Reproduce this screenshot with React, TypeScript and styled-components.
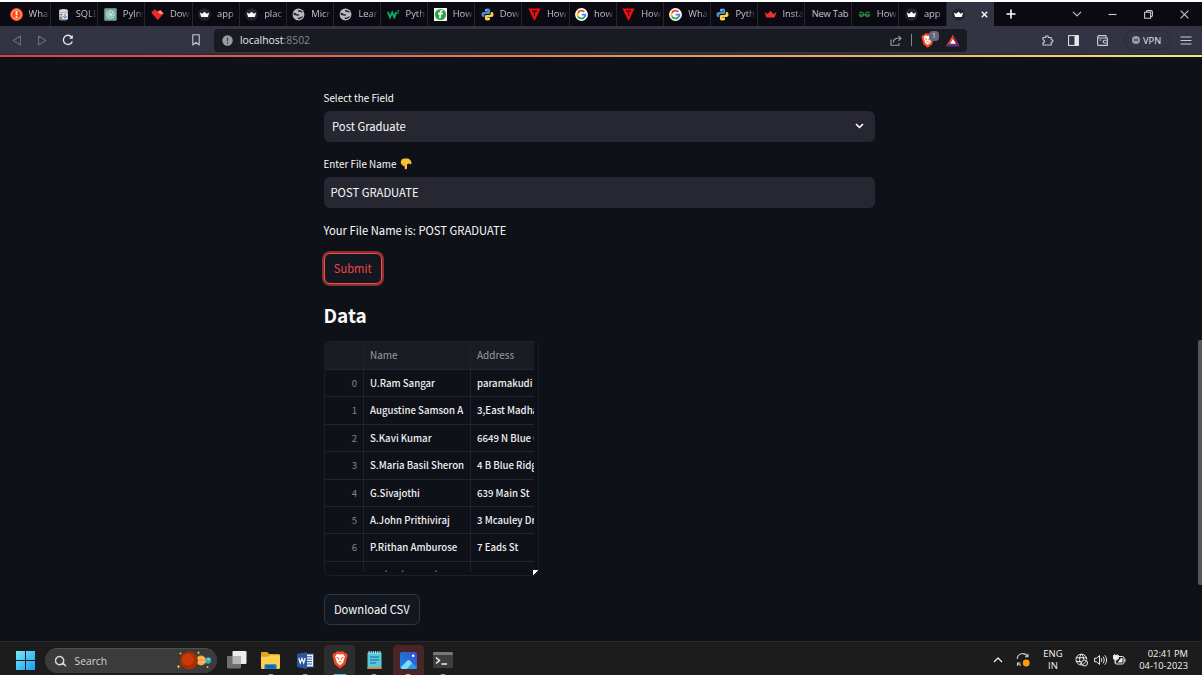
import React from 'react';
import styled, { createGlobalStyle, css } from 'styled-components';

const ui = `"Open Sans", "Noto Sans", sans-serif`;
const source = `"Noto Sans CJK JP", "Noto Sans", sans-serif`;

const GlobalStyle = createGlobalStyle`
  * { box-sizing: border-box; }
  body { margin: 0; background: #0e1117; overflow: hidden; }
  svg { display: block; flex: none; }
`;

const Screen = styled.div`
  width: 1202px;
  height: 675px;
  display: flex;
  flex-direction: column;
  border-top: 2px solid #fdfdfd;
  overflow: hidden;
  background: #0e1117;
`;

/* ---------- Browser chrome ---------- */

const TabStrip = styled.div`
  flex: none;
  display: flex;
  height: 24px;
  padding-left: 4px;
  background: #0b0a13;
  font-family: ${ui};
`;

const TabBox = styled.div<{ $active?: boolean; $bare?: boolean }>`
  position: relative;
  flex: none;
  width: 47.13px;
  display: flex;
  align-items: center;
  gap: 6px;
  padding-left: ${p => (p.$bare ? 6.5 : 5.5)}px;
  background: ${p => (p.$active ? '#323443' : 'transparent')};
  border-right: ${p => (p.$active ? 'none' : '1px solid #25252a')};
`;

const TabTitle = styled.span<{ $full?: boolean }>`
  width: ${p => (p.$full ? 38 : 20)}px;
  overflow: hidden;
  white-space: nowrap;
  font-size: 9.4px;
  line-height: 14px;
  letter-spacing: ${p => (p.$full ? '-0.2px' : '0')};
  color: #c3c3c9;
  ${p =>
    !p.$full &&
    css`
      mask-image: linear-gradient(90deg, #000 60%, transparent 105%);
    `}
`;

const TabClose = styled.div`
  margin-left: 9.5px;
`;

const WindowControls = styled.div`
  flex: 1;
  display: flex;
  align-items: center;
  padding-left: 11px;
`;

const Spacer = styled.div<{ $w: number }>`
  flex: none;
  width: ${p => p.$w}px;
`;

const Toolbar = styled.div`
  flex: none;
  height: 28px;
  display: flex;
  align-items: center;
  background: #323443;
  font-family: ${ui};
`;

const AddressBar = styled.div`
  width: 753px;
  height: 23px;
  display: flex;
  align-items: center;
  padding: 0 7px 0 8px;
  border-radius: 4px;
  background: #191b22;
`;

const Url = styled.span`
  flex: 1;
  margin-left: 7px;
  font-size: 10.4px;
  line-height: 16px;
  color: #e9eaec;
  span { color: #85868c; }
`;

const Divider = styled.div`
  width: 1px;
  height: 12px;
  margin: 0 9px;
  background: #85868c;
`;

const VpnPill = styled.div`
  width: 47px;
  height: 20px;
  display: flex;
  align-items: center;
  gap: 3px;
  padding-left: 7px;
  border: 1px solid #292b36;
  border-radius: 10px;
  font: 500 9.3px ${ui};
  color: #e4e4ea;
`;

const ShieldBadge = styled.div`
  position: relative;
  width: 18px;
  height: 16px;
  margin-right: 7px;
  svg { margin-top: 1px; }
  span {
    position: absolute;
    top: -1px;
    left: 8px;
    width: 10px;
    height: 10px;
    border-radius: 3.5px;
    background: #646777;
    color: #dfe0e6;
    font-size: 7px;
    line-height: 10px;
    text-align: center;
  }
`;

const Decoration = styled.div`
  flex: none;
  height: 3px;
  border-top: 1px solid #2c2630;
  background: linear-gradient(90deg, #d8433f 0%, #e56a4b 30%, #e8965a 55%, #efc069 80%, #f2ea7e 100%);
`;

/* ---------- Streamlit page ---------- */

const Page = styled.main`
  position: relative;
  flex: none;
  height: 584px;
  padding: 31px 0 0 323.5px;
  background: #0e1117;
  color: #fafafa;
  font-family: ${source};
  overflow: hidden;
`;

const Scrollbar = styled.div`
  position: absolute;
  right: 0;
  top: 283px;
  width: 4px;
  height: 245px;
  border-radius: 2px 0 0 2px;
  background: #54565b;
`;

const Label = styled.label`
  display: flex;
  align-items: center;
  gap: 4px;
  height: 20px;
  margin-bottom: 3px;
  font-size: 9.9px;
  line-height: 20px;
`;

const Field = styled.div<{ $left: number }>`
  display: flex;
  align-items: center;
  justify-content: space-between;
  width: 551.5px;
  height: 31px;
  margin-bottom: 12px;
  padding: 0 11.5px 1px ${p => p.$left}px;
  border-radius: 6px;
  background: #262730;
  font-size: 11.25px;
`;

const Paragraph = styled.p`
  height: 20px;
  margin: 13px 0 12px;
  font-size: 11.25px;
  line-height: 19px;
`;

const Button = styled.button<{ $focused?: boolean; $w: number }>`
  display: block;
  width: ${p => p.$w}px;
  height: 31px;
  padding: 0;
  border: 1px solid ${p => (p.$focused ? '#ff4b4b' : '#34363d')};
  border-radius: 6px;
  background: #131720;
  box-shadow: ${p => (p.$focused ? '0 0 0 2px rgba(255, 75, 75, 0.5)' : 'none')};
  color: ${p => (p.$focused ? '#ee4648' : '#fafafa')};
  font: 400 11.2px/27px ${source};
  white-space: nowrap;
`;

const Heading = styled.h3`
  height: 26px;
  margin: 18px 0 13px;
  font-size: 19px;
  font-weight: 700;
  line-height: 26px;
`;

const Grid = styled.div`
  position: relative;
  width: 215px;
  height: 235px;
  margin-bottom: 18px;
  border: 1px solid #1c1f26;
  border-radius: 6px;
  overflow: hidden;
`;

const GridCanvas = styled.div`
  width: 209.5px;
  height: 230px;
  overflow: hidden;
`;

const Row = styled.div<{ $head?: boolean }>`
  display: grid;
  grid-template-columns: 39.5px 107px 63px;
  height: ${p => (p.$head ? 28 : 27.4)}px;
  border-bottom: 1px solid #22252b;
  background: ${p => (p.$head ? '#1a1c24' : 'transparent')};
  color: ${p => (p.$head ? '#9a9ba1' : '#f0f0f2')};
  font-size: ${p => (p.$head ? 10 : 9.65)}px;
  font-weight: ${p => (p.$head ? 400 : 500)};
  line-height: 26px;
`;

const Cell = styled.div<{ $index?: boolean }>`
  overflow: hidden;
  white-space: nowrap;
  padding: ${p => (p.$index ? '0 6px 0 0' : '0 0 0 6px')};
  border-right: 1px solid #1f2228;
  &:last-child { border-right: none; }
  ${p =>
    p.$index &&
    css`
      color: #83848a;
      font-weight: 400;
      text-align: right;
    `}
`;

const ResizeHandle = styled.div`
  position: absolute;
  right: 0;
  bottom: 0;
  width: 5px;
  height: 5px;
  background: linear-gradient(135deg, #fff 55%, #0e1117 56%);
`;

/* ---------- Taskbar ---------- */

const Taskbar = styled.footer`
  flex: none;
  height: 34px;
  display: flex;
  align-items: center;
  padding: 3px 14px 0 16px;
  border-top: 1px solid #2b2b2d;
  background: #1c1c1c;
  font-family: ${ui};
  color: #f2f2f2;
`;

const SearchBox = styled.div`
  width: 172px;
  height: 25px;
  display: flex;
  align-items: center;
  margin: 0 4px 0 10px;
  padding: 0 4px 0 9.5px;
  border-radius: 13px;
  border-top: 1px solid #505050;
  background: #3b3b3b;
  font-size: 10.3px;
  color: #d4d4d4;
  span { flex: 1; margin-left: 8px; }
`;

const AppSlot = styled.div<{ $bg?: string; $mark?: string; $wide?: boolean }>`
  position: relative;
  width: 31px;
  height: 31px;
  margin-right: 3.4px;
  display: flex;
  align-items: center;
  justify-content: center;
  border-radius: 4px;
  background: ${p => p.$bg ?? 'transparent'};
  &::after {
    content: '';
    display: ${p => (p.$mark ? 'block' : 'none')};
    position: absolute;
    bottom: 0;
    left: 50%;
    width: ${p => (p.$wide ? 13 : 5)}px;
    height: 2px;
    transform: translateX(-50%);
    border-radius: 1px;
    background: ${p => p.$mark};
  }
`;

const Tray = styled.div`
  flex: 1;
  display: flex;
  align-items: center;
  justify-content: flex-end;
`;

const TrayText = styled.div<{ $align: string; $w: number; $size: number }>`
  width: ${p => p.$w}px;
  font-size: ${p => p.$size}px;
  line-height: 12.3px;
  text-align: ${p => p.$align};
  white-space: nowrap;
`;

/* ---------- Icons ---------- */

const Crown = ({ red }: { red?: boolean }) => (
  <svg width="13" height="13" viewBox="0 0 13 13">
    {!red && <circle cx="6.5" cy="6.5" r="6.3" fill="#24252b" />}
    <path
      d={red ? 'M.5 4 3.6 6 6.5 2.8 9.4 6 12.5 4 10.6 9.6H2.4Z' : 'M1.8 4.4 4.2 5.8 6.5 3.8 8.8 5.8 11.2 4.4 9.8 9H3.2Z'}
      fill={red ? '#ee3030' : '#fff'}
    />
  </svg>
);

const Globe = () => (
  <svg width="13" height="13" viewBox="0 0 13 13">
    <circle cx="6.5" cy="6.5" r="5.9" fill="#b9bbc0" />
    <path d="M1.600 5C3.600 4.200 4.200 6.600 6.400 6.200 8 6 7.200 7.600 6.200 7.800 4.800 8 4.600 7 1.600 7ZM6.400 1.900C8 1.700 10.300 2.800 10.900 4.500 9.200 4.900 8.800 3.900 7.600 4 6.600 4.100 5.600 3 6.400 1.900ZM5.500 9.500C7.500 9.800 9.200 8.800 11.200 7.700 10.400 9.800 8.800 11.200 6.200 11.200Z" fill="#2a2b32" />
  </svg>
);

const Python = () => (
  <svg width="13" height="13" viewBox="0 0 13 13">
    <path d="M6.4.5C4.2.5 4 1.4 4 2.200v1.300h2.600v.5H2.400C1.200 4 .5 4.900.5 6.500S1.200 9 2.200 9H3.200V7.500C3.200 6.500 4 5.900 4.900 5.900H7.900C8.700 5.900 9.200 5.300 9.200 4.600V2.200C9.200 1.200 8.200.5 6.400.5Z" fill="#4a8fc7" />
    <path d="M6.600 12.500c2.200 0 2.400-.9 2.400-1.700V9.500H6.400V9h4.200c1.200 0 1.900-.9 1.900-2.500S11.800 4 10.800 4H9.900v1.200c0 1-.8 1.700-1.700 1.700H5.200C4.400 6.900 3.900 7.600 3.900 8.300v2.400c0 1.100.9 1.800 2.700 1.800Z" fill="#fbd245" />
    <circle cx="5.100" cy="2.200" r=".6" fill="#fff" />
    <circle cx="7.900" cy="10.900" r=".6" fill="#fff" />
  </svg>
);

const Google = () => (
  <svg width="13" height="13" viewBox="0 0 13 13">
    <circle cx="6.500" cy="6.500" r="6.400" fill="#fff" />
    <g fill="none" strokeWidth="1.800">
      <path d="M9.400 3.800A4 4 0 0 0 2.900 4.800" stroke="#ea4335" />
      <path d="M2.900 4.800a4 4 0 0 0 0 3.500" stroke="#fbbc05" />
      <path d="M2.900 8.300a4 4 0 0 0 6.200 1.200" stroke="#34a853" />
      <path d="M9.100 9.500a4 4 0 0 0 1.300-2.900H6.600" stroke="#4285f4" />
    </g>
  </svg>
);

const RedTriangle = () => (
  <svg width="13" height="13" viewBox="0 0 13 13">
    <path d="M.3.5h12.400L6.500 12.900Z" fill="#f30b10" />
    <path d="M4 3.200h5M6.500 3.200v4.800" stroke="#2a0508" strokeWidth="1.200" />
  </svg>
);

const Alert = () => (
  <svg width="13" height="13" viewBox="0 0 13 13">
    <circle cx="6.500" cy="6.500" r="6.400" fill="#fb4b16" />
    <circle cx="6.500" cy="6.500" r="4.800" fill="none" stroke="#fff" strokeWidth=".6" />
    <path d="M6.500 3v4.200M6.500 8.300v1.600" stroke="#fff" strokeWidth="1.700" />
  </svg>
);

const Database = () => (
  <svg width="13" height="13" viewBox="0 0 13 13">
    <path d="M2 2.500h9v8.500a4.500 1.500 0 0 1-9 0Z" fill="#8f9297" />
    <ellipse cx="6.500" cy="2.500" rx="4.500" ry="1.600" fill="#d9dadc" />
    <path d="M2 5.200h9M2 8h9" stroke="#dedfe1" strokeWidth="1.200" />
    <path d="M5.500 5.500h5v5.500H5.500Z" fill="#e7edf2" />
    <path d="M6.200 8.200 8 10.200 9.800 8.200M8 5.800v4" stroke="#2a72b5" strokeWidth=".9" fill="none" />
  </svg>
);

const ChatGpt = () => (
  <svg width="13" height="13" viewBox="0 0 13 13">
    <rect x=".3" y=".3" width="12.400" height="12.400" rx="1" fill="#74aa9c" />
    <g fill="none" stroke="#e9f3f0" strokeWidth=".65">
      {[0, 60, 120, 180, 240, 300].map(a => (
        <path key={a} d="M4.700 3.700a1.900 1.900 0 0 1 3.600 0v2.200L6.500 7" transform={`rotate(${a} 6.500 6.500)`} />
      ))}
    </g>
  </svg>
);

const RedDiamond = () => (
  <svg width="13" height="13" viewBox="0 0 13 13">
    <path d="M.3 4.500 3.600 1.200 6.500 3.400 9.500 2.200 12.700 5.400 6.700 12Z" fill="#ec2a2a" />
    <path d="M6.500 3.400 9.500 2.200 12.700 5.400 9.500 6.400Z" fill="#ff8a80" />
    <path d="M9.500 6.400 12.700 5.400 6.700 12Z" fill="#cf2023" />
  </svg>
);

const W3 = () => (
  <svg width="13" height="13" viewBox="0 0 13 13">
    <path d="M.8 3.800 3 9.200 5.200 4.500 7.300 9.200 9.300 3.800" fill="none" stroke="#0fa968" strokeWidth="1.900" />
    <path d="M10 2.500h1.800L10.900 4c1.200 0 1.200 2-.9 1.500" fill="none" stroke="#0fa968" strokeWidth=".8" />
  </svg>
);

const GreenBadge = () => (
  <svg width="13" height="13" viewBox="0 0 13 13">
    <rect width="13" height="13" fill="#f4f8f4" />
    <circle cx="6.500" cy="6.500" r="5.600" fill="#2da248" />
    <path d="M8.700 2.700C7 2.200 6.400 3.400 6.300 4.800L5.900 10.300M4 5.600h4.800" fill="none" stroke="#fff" strokeWidth="1.600" />
  </svg>
);

const Geeks = () => (
  <svg width="13" height="13" viewBox="0 0 13 13">
    <path d="M1.500 5C3 3.400 5.600 4.200 5.600 6.500S2 9.800 1.400 6.800H11.600C11 9.800 7.400 8.800 7.400 6.500S10 3.400 11.500 5" fill="none" stroke="#2b8a46" strokeWidth="1.200" />
  </svg>
);

const Stroke = ({ w, h = w, d, color = '#c9cad2', sw = 1.1 }: { w: number; h?: number; d: string; color?: string; sw?: number }) => (
  <svg width={w} height={h} viewBox={`0 0 ${w} ${h}`} fill="none" stroke={color} strokeWidth={sw} strokeLinejoin="round">
    <path d={d} />
  </svg>
);

const BraveLion = ({ size }: { size: number }) => (
  <svg width={size} height={size * 1.12} viewBox="0 0 16 18">
    <path d="M4.600.5h6.800l1.700 1.800 1.700.3.8 2.400-.6 1.500-1.700 6.800L8 17.700l-5.300-4.400L1 6.500.4 5l.8-2.400 1.700-.3Z" fill="#fb4a1f" />
    <path d="M8 3.600 11 3.100l2 2.600-1.600 4.400-.2 1.400L8 14.200l-3.200-2.700-.2-1.400L3 5.700 5 3.100Z" fill="#fff" />
    <path d="M4.600 6.400 6.800 7.300 6.600 8.800M11.400 6.400 9.200 7.300 9.400 8.800M6.400 11.300 8 10.400l1.600.9" fill="none" stroke="#fb4a1f" strokeWidth="1" />
  </svg>
);

const BatTriangle = () => (
  <svg width="14" height="13" viewBox="0 0 14 13">
    <path d="M7 .5 7 5 3.800 9.500 0 12.500Z" fill="#ff4724" />
    <path d="M7 .5 14 12.500 10 9.500 7 5Z" fill="#9e1f63" />
    <path d="M0 12.500 3.800 9.500h6.200l4 3Z" fill="#662d91" />
    <path d="M7 4.800 10 9.700H4Z" fill="#fff" />
  </svg>
);

const PointDown = () => (
  <svg width="12" height="12" viewBox="0 0 12 12">
    <path d="M.8 4.500C.6 2 2.200.4 4.600.4h2.800C9.500.4 11.500 3 11.500 5c0 1.200-1.400 1.600-2 .8L8.600 5.500 7.100 6.300 7 10.200c-.1 1.500-2.200 1.500-2.300 0L4.500 7.800C3.200 8.500 2.400 7.600 2.400 6.800 1.200 6.900.9 5.700.8 4.500Z" fill="#fcc32f" />
    <path d="M2.400 6.700V5M4.500 7.700V5.300" stroke="#d48a17" strokeWidth=".5" />
  </svg>
);

const WindowsLogo = () => (
  <svg width="19" height="19" viewBox="0 0 19 19">
    <defs>
      <linearGradient id="win" x1="0" y1="0" x2="19" y2="19" gradientUnits="userSpaceOnUse">
        <stop offset="0" stopColor="#7be7fb" />
        <stop offset="1" stopColor="#169ef0" />
      </linearGradient>
    </defs>
    <path d="M0 0h9v9H0ZM10 0h9v9h-9ZM0 10h9v9H0ZM10 10h9v9h-9Z" fill="url(#win)" />
  </svg>
);

const Planets = () => (
  <svg width="36" height="19" viewBox="0 0 36 19">
    <circle cx="31" cy="9.500" r="3.200" fill="#2fa5c9" />
    <circle cx="31.500" cy="8.300" r="1.400" fill="#7fe08a" />
    <circle cx="24" cy="9.500" r="5" fill="#f5a64b" />
    <path d="M20.500 7.500Q24 5.800 27 7.500M20.500 11H28" stroke="#ffd08a" strokeWidth=".9" fill="none" />
    <circle cx="12" cy="9.500" r="9" fill="#a92c05" />
    <circle cx="11" cy="8.500" r="6" fill="#c53c08" />
    <path d="M1.500 14v3.400M-.2 15.700h3.400M3.500 1.500v2M2.500 2.500h2M21.500.5v2.600M20.200 1.800h2.600M30.500 15v2M29.500 16h2" stroke="#f2c230" strokeWidth=".9" />
  </svg>
);

const TaskView = () => (
  <svg width="20" height="18" viewBox="0 0 20 18">
    <rect x="5.500" y="0" width="14" height="13" rx="1" fill="#ededed" />
    <rect x="0" y="5" width="14" height="12.500" rx="1" fill="#6f6f6f" />
    <path d="M5.500 5h8.500v8h-8.500Z" fill="#b5b5b5" />
  </svg>
);

const Folder = () => (
  <svg width="19" height="17" viewBox="0 0 19 17">
    <path d="M0 1.200C0 .5.500 0 1.200 0h5l2 2H17.500c.8 0 1.500.6 1.500 1.400V15H0Z" fill="#e5a21a" />
    <path d="M0 4.800h7.200L9 3.300h10V15.500c0 .8-.6 1.500-1.400 1.500H1.400C.6 17 0 16.300 0 15.500Z" fill="#ffd04d" />
    <path d="M3.500 17v-3.500c0-.8.6-1.300 1.300-1.300h9.400c.7 0 1.300.5 1.300 1.300V17Z" fill="#1677c9" />
    <path d="M6 14.500h7" stroke="#0c4b8d" />
  </svg>
);

const WordIcon = () => (
  <svg width="17" height="17" viewBox="0 0 17 17">
    <rect x="7" y="2" width="9.500" height="13" fill="#f3f6fb" stroke="#2b5797" />
    <path d="M9 4.800h6M9 7.200h6M9 9.600h6M9 12h6" stroke="#2b5797" />
    <path d="M0 2 10 0v17L0 15Z" fill="#29559c" />
    <path d="M1.800 6 3.300 11 5 6.500 6.700 11 8.200 6" fill="none" stroke="#fff" strokeWidth="1.200" />
  </svg>
);

const Notepad = () => (
  <svg width="15" height="18" viewBox="0 0 15 18">
    <rect x=".5" y="1.500" width="14" height="16.500" rx="1" fill="#58c7de" />
    <rect x=".5" y="16" width="14" height="2" fill="#d58b47" />
    <path d="M2 0v3M4.200 0v3M6.400 0v3M8.600 0v3M10.800 0v3M13 0v3" stroke="#b7edf7" />
    <path d="M3 6h9M3 9h9M3 12h6" stroke="#176e8c" strokeWidth="1.200" />
  </svg>
);

const Photos = () => (
  <svg width="17" height="17" viewBox="0 0 17 17">
    <defs>
      <linearGradient id="photo" x1="0" y1="1" x2="1" y2="0">
        <stop offset="0" stopColor="#1787e0" />
        <stop offset="1" stopColor="#3850c9" />
      </linearGradient>
    </defs>
    <rect width="17" height="17" rx="2" fill="url(#photo)" />
    <path d="M.5 15.500 7.500 8.500c.8-.8 1.500-.8 2.200 0L12.500 11.300 7 17H2Z" fill="#7bdcfb" />
    <path d="M7 17 12.500 11.300 17 15.500Q16.500 17 15 17Z" fill="#2a9ce8" />
    <circle cx="13.200" cy="3.800" r="1.300" fill="#fff" />
  </svg>
);

const Terminal = () => (
  <svg width="20" height="16" viewBox="0 0 20 16">
    <rect width="20" height="16" rx="1.500" fill="#3d3d3d" />
    <path d="M0 3V1.500C0 .6.600 0 1.500 0h17c.9 0 1.500.6 1.500 1.500V3Z" fill="#777" />
    <path d="M3 5.500 6.500 8.500 3 11.500M8.500 12H14" fill="none" stroke="#f0f0f0" strokeWidth="1.500" />
  </svg>
);

const Sync = () => (
  <svg width="14" height="14" viewBox="0 0 14 14">
    <path d="M1.200 6A5.500 5.500 0 0 1 11.500 3.500M12 .8v3H9M1.500 13v-3h3M1.800 10.200A5.500 5.500 0 0 0 5 12.400" fill="none" stroke="#c9c9c9" strokeWidth="1.100" />
    <circle cx="10.200" cy="10" r="3.400" fill="#fb9a0b" />
  </svg>
);

const NetGlobe = () => (
  <svg width="13" height="14" viewBox="0 0 13 14" fill="none" stroke="#ececec" strokeWidth="1">
    <path d="M11.800 6.500A5.400 5.400 0 1 0 6.500 12M1.200 4.800h10.400M1.200 8.500h5M6.400 1C4 3.500 4 9.500 6.400 12M6.400 1C8 2.500 8.600 4.500 8.500 6.500" />
    <circle cx="9.500" cy="10" r="3" />
    <path d="M7.500 12 11.500 8" />
  </svg>
);

const Speaker = () => (
  <svg width="13" height="12" viewBox="0 0 13 12" fill="none" stroke="#ececec" strokeWidth="1">
    <path d="M.6 4.200v3.600h2L5.500 10.500v-9L2.600 4.200ZM7.200 4.200c.8 1 .8 2.600 0 3.600M9 2.700c1.600 1.800 1.600 4.800 0 6.600M10.800 1.300c2.300 2.700 2.300 6.700 0 9.400" />
  </svg>
);

const Battery = () => (
  <svg width="13" height="12" viewBox="0 0 13 12">
    <rect x="2" y="2.500" width="9" height="7.500" rx="1.500" fill="none" stroke="#ececec" />
    <path d="M11.500 4.800h1v3h-1Z" fill="#ececec" />
    <path d="M8 4h1.500v4.500H4.500Z" fill="#ececec" />
    <path d="M0 1.500h5.500v2.300C5.500 5.300 4.300 5.800 2.800 5.800S0 5.300 0 3.800ZM1.500 0v2M4 0v2M2.700 5v5" fill="#ececec" stroke="#ececec" strokeWidth=".8" />
  </svg>
);

/* ---------- Data ---------- */

const tabs: [React.ReactNode, string][] = [
  [<Alert />, 'What'],
  [<Database />, 'SQLE'],
  [<ChatGpt />, 'PyIns'],
  [<RedDiamond />, 'Dow'],
  [<Crown />, 'app'],
  [<Crown />, 'plac'],
  [<Globe />, 'Micr'],
  [<Globe />, 'Lear'],
  [<W3 />, 'Pyth'],
  [<GreenBadge />, 'How'],
  [<Python />, 'Dow'],
  [<RedTriangle />, 'How'],
  [<Google />, 'how'],
  [<RedTriangle />, 'How'],
  [<Google />, 'Wha'],
  [<Python />, 'Pyth'],
  [<Crown red />, 'Insta'],
  [null, 'New Tab'],
  [<Geeks />, 'How'],
  [<Crown />, 'app'],
];

const rows: [string, string][] = [
  ['U.Ram Sangar', 'paramakudi'],
  ['Augustine Samson A', '3,East Madha'],
  ['S.Kavi Kumar', '6649 N Blue G'],
  ['S.Maria Basil Sheron', '4 B Blue Ridge'],
  ['G.Sivajothi', '639 Main St'],
  ['A.John Prithiviraj', '3 Mcauley Dr'],
  ['P.Rithan Amburose', '7 Eads St'],
];

export default function App() {
  return (
    <Screen>
      <GlobalStyle />
      <TabStrip>
        {tabs.map(([icon, title], i) => (
          <TabBox key={i} $bare={!icon}>
            {icon}
            <TabTitle $full={!icon}>{title}</TabTitle>
          </TabBox>
        ))}
        <TabBox $active>
          <Crown />
          <TabClose>
            <Stroke w={7} d="M.8.800 6.200 6.200M6.200.8.800 6.200" color="#f2f2f5" sw={1.5} />
          </TabClose>
        </TabBox>
        <WindowControls>
          <Spacer $w={1} />
          <Stroke w={10} d="M5 .5v9M.5 5h9" color="#fff" sw={1.6} />
          <Spacer $w={56} />
          <Stroke w={10} h={6} d="M1 .8 5 4.800 9 .8" />
          <Spacer $w={26.5} />
          <Stroke w={9} d="M.5 4.500h8" />
          <Spacer $w={26.5} />
          <Stroke w={9} d="M.6 2.300h6v6h-6ZM2.500 2V1.500Q2.500.6 3.500.6H7Q8.400.6 8.400 2V5.500Q8.400 6.500 7 6.700" />
          <Spacer $w={27} />
          <Stroke w={9} d="M.6.600 8.400 8.400M8.400.6.600 8.400" />
        </WindowControls>
      </TabStrip>
      <Toolbar>
        <Spacer $w={12} />
        <Stroke w={10} h={11} d="M8.500 1v9L1.200 5.500Z" color="#686a78" />
        <Spacer $w={15} />
        <Stroke w={10} h={11} d="M1.500 1v9l7.300-4.500Z" color="#686a78" />
        <Spacer $w={14.5} />
        <svg width="12" height="12" viewBox="0 0 12 12" fill="none" stroke="#e9e9ee" strokeWidth="1.300">
          <path d="M10.300 7.500A4.600 4.600 0 1 1 9.600 3" />
          <path d="M10.800 1v3.700H7.200Z" fill="#e9e9ee" stroke="none" />
        </svg>
        <Spacer $w={118.5} />
        <Stroke w={8} h={12} d="M.8.800H7.200V11L4 8.300.8 11Z" />
        <Spacer $w={14} />
        <AddressBar>
          <svg width="11" height="11" viewBox="0 0 11 11">
            <circle cx="5.500" cy="5.500" r="5.200" fill="#9b9da6" />
            <path d="M5.500 2.500v3.800M5.500 7.300v1.400" stroke="#40424c" strokeWidth="1.300" />
          </svg>
          <Url>localhost<span>:8502</span></Url>
          <Stroke w={12} h={11} d="M1 4.500v5.700h8V8M3.300 7.500C3.300 4.500 5.500 3.300 8 3.300h3M8.500.8 11 3.300 8.500 5.800" color="#9d9fa8" />
          <Divider />
          <ShieldBadge>
            <BraveLion size={13.500} />
            <span>1</span>
          </ShieldBadge>
          <BatTriangle />
        </AddressBar>
        <Spacer $w={75} />
        <Stroke w={12} h={12} d="M1 3.500H3.700C3 1.200 6.800 1.200 6.200 3.500H9.200V5.800C11.500 5.200 11.500 8.800 9.200 8.200V11H1V8.600C3 8.800 3 5.800 1 6Z" />
        <Spacer $w={13.500} />
        <svg width="11" height="11" viewBox="0 0 11 11">
          <rect x=".6" y=".6" width="9.800" height="9.800" fill="none" stroke="#e6e6eb" />
          <path d="M6.500.6h4v9.800h-4Z" fill="#e6e6eb" />
        </svg>
        <Spacer $w={18.500} />
        <Stroke w={11} d="M.6 3V9.400Q.6 10.400 1.600 10.400H10.400V3ZM.6 3Q.6.6 2 .6H9V3M10.400 5.300H7.500Q6.300 5.300 6.300 6.700T7.500 8H10.400M2.500 5H4.500" />
        <Spacer $w={16} />
        <VpnPill>
          <svg width="8" height="8" viewBox="0 0 8 8">
            <circle cx="4" cy="4" r="4" fill="#9899a9" />
            <path d="M2 4h4" stroke="#323443" strokeWidth="1.200" />
          </svg>
          VPN
        </VpnPill>
        <Spacer $w={9} />
        <Stroke w={12} h={9} d="M.5 1h11M.5 4.500h11M.5 8h11" />
      </Toolbar>
      <Decoration />

      <Page>
        <Label>Select the Field</Label>
        <Field $left={8.500}>
          Post Graduate
          <Stroke w={9} h={6} d="M1 1 4.500 4.500 8 1" color="#fafafa" sw={1.7} />
        </Field>
        <Label>
          Enter File Name <PointDown />
        </Label>
        <Field $left={7}>POST GRADUATE</Field>
        <Paragraph>Your File Name is: POST GRADUATE</Paragraph>
        <Button $focused $w={58.500}>Submit</Button>
        <Heading>Data</Heading>
        <Grid>
          <GridCanvas>
            <Row $head>
              <Cell $index />
              <Cell>Name</Cell>
              <Cell>Address</Cell>
            </Row>
            {rows.map(([name, address], i) => (
              <Row key={name}>
                <Cell $index>{i}</Cell>
                <Cell>{name}</Cell>
                <Cell>{address}</Cell>
              </Row>
            ))}
            <Row>
              <Cell $index />
              <Cell>
                <svg width="80" height="10" viewBox="0 0 80 10" fill="#77787d">
                  <path d="M15.500 8.500h1.300v1.500h-1.300ZM32 8.500h1.300v1.500H32ZM65.500 8.500h1.300v1.500h-1.300Z" />
                </svg>
              </Cell>
              <Cell />
            </Row>
          </GridCanvas>
          <ResizeHandle />
        </Grid>
        <Button $w={96.500}>Download CSV</Button>
        <Scrollbar />
      </Page>

      <Taskbar>
        <WindowsLogo />
        <SearchBox>
          <Stroke w={12} d="M11 11.200 7.900 8A4.100 4.100 0 1 1 8.600 4.800 4.100 4.100 0 0 1 7.900 8" color="#d9d9d9" sw={1.5} />
          <span>Search</span>
          <Planets />
        </SearchBox>
        <AppSlot><TaskView /></AppSlot>
        <AppSlot $mark="#9a9a9a"><Folder /></AppSlot>
        <AppSlot $mark="#9a9a9a"><WordIcon /></AppSlot>
        <AppSlot $bg="#2d2d2d" $mark="#4cc2ff" $wide><BraveLion size={16} /></AppSlot>
        <AppSlot $mark="#9a9a9a"><Notepad /></AppSlot>
        <AppSlot $bg="#4a2527" $mark="#ff8e9b"><Photos /></AppSlot>
        <AppSlot $mark="#9a9a9a"><Terminal /></AppSlot>
        <Tray>
          <Stroke w={10} h={6} d="M1 5 5 1 9 5" color="#ececec" sw={1.3} />
          <Spacer $w={13} />
          <Sync />
          <Spacer $w={11} />
          <TrayText $align="center" $w={24} $size={9.500}>ENG<br />IN</TrayText>
          <Spacer $w={10} />
          <NetGlobe />
          <Spacer $w={6} />
          <Speaker />
          <Spacer $w={6} />
          <Battery />
          <TrayText $align="right" $w={62} $size={9.350}>02:41 PM<br />04-10-2023</TrayText>
        </Tray>
      </Taskbar>
    </Screen>
  );
}
